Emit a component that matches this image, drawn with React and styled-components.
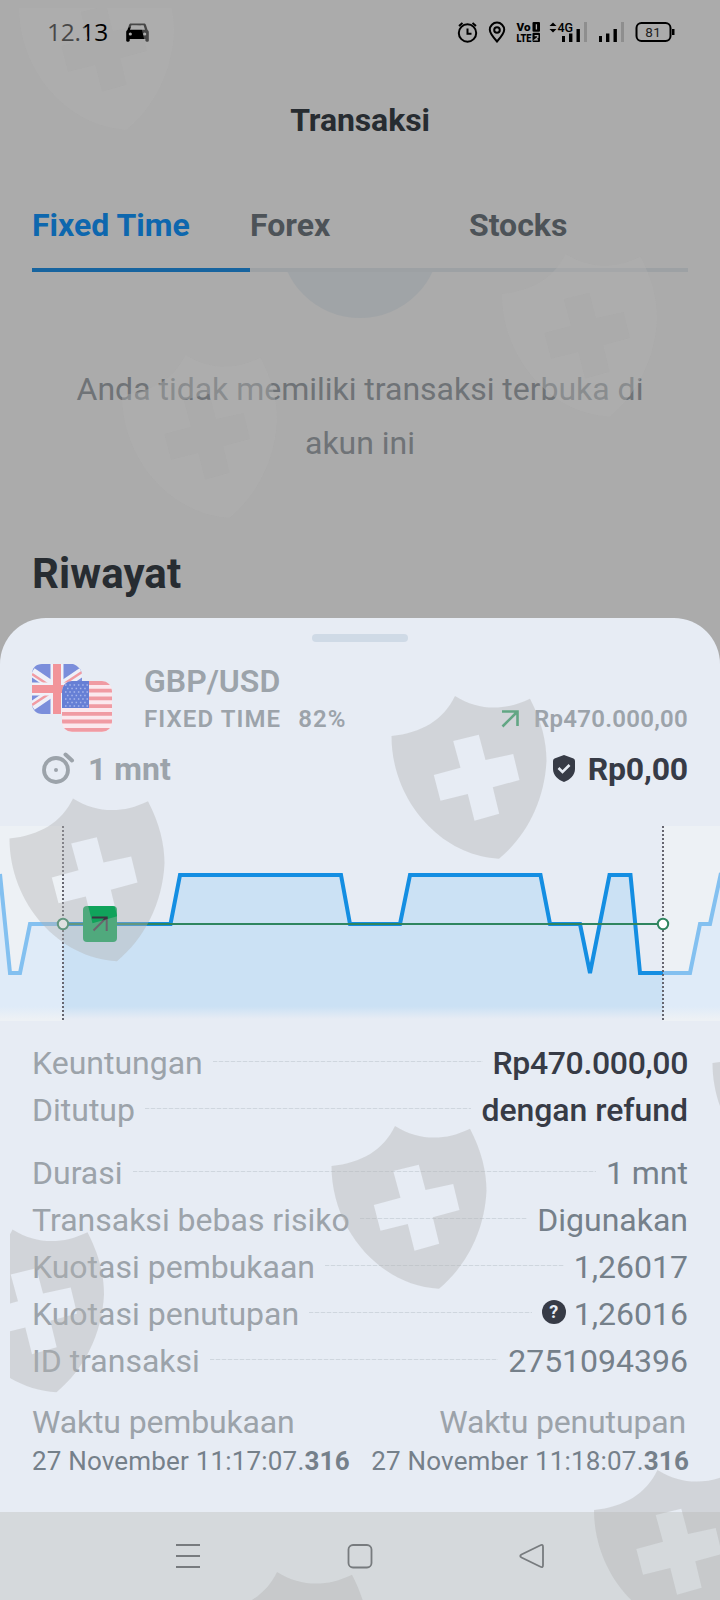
import React from 'react';
import styled, { createGlobalStyle } from 'styled-components';

const textDark = '#373b46';
const textMuted = '#9ca3aa';
const textValue = '#75808a';
const green = '#2f855f';

const GlobalStyle = createGlobalStyle`
  * {
    box-sizing: border-box;
  }

  body {
    margin: 0;
    background: #ababab;
    font-family: Roboto, sans-serif;
  }
`;

const Screen = styled.div`
  position: relative;
  display: flex;
  flex-direction: column;
  width: 720px;
  height: 1600px;
  overflow: hidden;
  background: #ababab;
`;

const StatusBar = styled.header`
  display: flex;
  justify-content: space-between;
  height: 64px;
  padding: 20px 42px 0 47px;
`;

const StatusLeft = styled.div`
  display: flex;
  gap: 19px;
`;

const Clock = styled.span`
  width: 60px;
  font: 400 24.5px/23px 'Open Sans', sans-serif;
  letter-spacing: -0.3px;
  color: #000;
  white-space: nowrap;
`;

const StatusSvg = styled.svg`
  display: block;
  margin-top: ${({ $top }) => $top || '0'};
  font-family: Roboto, sans-serif;
`;

const Title = styled.h1`
  margin: 36px 0 0;
  height: 105px;
  font-size: 32px;
  font-weight: 700;
  line-height: 40px;
  letter-spacing: -0.1px;
  text-align: center;
  color: #272c31;
`;

const Tabs = styled.nav`
  display: grid;
  grid-template-columns: 218px 219px 1fr;
  margin: 0 32px;
`;

const Tab = styled.div`
  height: 67px;
  font-size: 32px;
  font-weight: 700;
  line-height: 41px;
  color: ${({ $active }) => ($active ? '#0d67ae' : '#4d5358')};
  border-bottom: 4px solid ${({ $active }) => ($active ? '#17649f' : '#9da1a4')};
`;

const Empty = styled.section`
  display: flex;
  flex-direction: column;
  align-items: center;
  height: 277px;
`;

const EmptyCircle = styled.div`
  width: 160px;
  height: 90px;
  overflow: hidden;

  &::before {
    content: '';
    display: block;
    width: 160px;
    height: 160px;
    margin-top: -114px;
    border-radius: 50%;
    background: #a0a4a7;
  }
`;

const EmptyText = styled.p`
  width: 600px;
  margin: 0;
  font-size: 32px;
  line-height: 54px;
  letter-spacing: -0.02px;
  text-align: center;
  color: #6f7377;
`;

const History = styled.h2`
  height: 69px;
  margin: 0 32px;
  font-size: 42px;
  font-weight: 700;
  line-height: 50px;
  letter-spacing: 0.1px;
  color: #272c31;
`;

const Sheet = styled.main`
  height: 894px;
  background: #e7ecf4;
  border-radius: 46px 46px 0 0;
`;

const SheetTop = styled.div`
  height: 46px;
  padding-top: 16px;
`;

const Handle = styled.div`
  width: 96px;
  height: 8px;
  margin: 0 auto;
  border-radius: 4px;
  background: #cfdae6;
`;

const Asset = styled.div`
  display: flex;
  height: 76px;
  padding: 0 32px;
`;

const AssetInfo = styled.div`
  flex: 1;
  margin-left: 31px;
  color: ${textMuted};
`;

const Pair = styled.div`
  height: 37px;
  font-size: 32px;
  font-weight: 600;
  line-height: 34px;
`;

const SubLine = styled.div`
  display: flex;
  align-items: center;
  height: 36px;
  font-size: 24px;
  font-weight: 600;
  line-height: 36px;
  letter-spacing: 1.1px;
`;

const Percent = styled.span`
  margin-left: 17px;
`;

const Stake = styled.span`
  display: flex;
  align-items: center;
  gap: 15px;
  margin-left: auto;
  letter-spacing: 0.25px;
`;

const Result = styled.div`
  display: flex;
  justify-content: space-between;
  height: 86px;
  padding: 8px 32px 0 40px;
  font-size: 32px;
  font-weight: 700;
  line-height: 42px;
`;

const ResultPart = styled.div`
  display: flex;
  gap: ${({ $gap }) => $gap};
  letter-spacing: ${({ $spacing }) => $spacing || '0'};
  color: ${({ $color }) => $color};

  svg {
    margin-top: ${({ $iconTop }) => $iconTop};
  }
`;

const ChartSvg = styled.svg`
  display: block;
`;

const Details = styled.dl`
  margin: 0;
  padding: 19px 32px 0;
`;

const Row = styled.div`
  display: flex;
  height: 47px;
  margin-top: ${({ $gap }) => ($gap ? '16px' : '0')};
  font-size: 32px;
  line-height: 47px;
`;

const Label = styled.dt`
  color: ${textMuted};
`;

const Leader = styled.div`
  flex: 1;
  height: 1px;
  margin: 21px 10px 0 10px;
  background: repeating-linear-gradient(90deg, #cfd6de 0 4px, #e0e6ed 4px 6px);
`;

const Value = styled.dd`
  display: flex;
  margin: 0;
  font-weight: ${({ $strong }) => ($strong ? 500 : 400)};
  letter-spacing: ${({ $spacing }) => $spacing || '0'};
  color: ${({ $strong }) => ($strong ? textDark : textValue)};
`;

const Help = styled.span`
  width: 24px;
  height: 24px;
  margin: 9px 8px 0 0;
  border-radius: 50%;
  background: ${textDark};
  color: #e7ecf4;
  font-size: 18px;
  font-weight: 700;
  line-height: 24px;
  text-align: center;
`;

const Times = styled.div`
  display: flex;
  justify-content: space-between;
  margin: 14px -1px 0 0;
`;

const TimeBlock = styled.div`
  text-align: ${({ $right }) => ($right ? 'right' : 'left')};
`;

const TimeLabel = styled.div`
  padding-right: 3px;
  font-size: 32px;
  line-height: 47px;
  letter-spacing: -0.15px;
  color: ${textMuted};
`;

const TimeValue = styled.div`
  font-size: 26px;
  line-height: 30px;
  letter-spacing: 0.18px;
  color: ${textValue};
  white-space: nowrap;

  b {
    font-weight: 700;
  }
`;

const NavBar = styled.footer`
  display: flex;
  justify-content: space-between;
  height: 88px;
  padding: 30px 174px 0;
  background: #d5d9dc;
`;

const Watermark = styled.svg`
  position: absolute;
  inset: 0;
  pointer-events: none;
`;

const rows = [
  { label: 'Keuntungan', value: 'Rp470.000,00', strong: true, spacing: '-0.35px' },
  { label: 'Ditutup', value: 'dengan refund', strong: true, spacing: '-0.05px' },
  { label: 'Durasi', value: '1 mnt', gap: true },
  { label: 'Transaksi bebas risiko', value: 'Digunakan' },
  { label: 'Kuotasi pembukaan', value: '1,26017' },
  { label: 'Kuotasi penutupan', value: '1,26016', help: true },
  { label: 'ID transaksi', value: '2751094396' },
];

// the ones over the dimmed page are barely visible
const shields = [
  { x: 19, y: -33, clip: 'top' },
  { x: 502, y: 254 },
  { x: 122, y: 355 },
  { x: 391.5, y: 696 },
  { x: 9.5, y: 798.5 },
  { x: 712.5, y: 1023 },
  { x: 331.5, y: 1126 },
  { x: -51, y: 1229.5, clip: 'left' },
  { x: 594, y: 1470 },
  { x: 213.5, y: 1572 },
];

const shieldPath =
  'M0 40C30 37 52 24 63.5 0C88 15 113 15 138.5 2.7C150 25 155 45 155 65C153 105 135 140 107.5 162.7C50 160 0 105 0 40Z' +
  'M61.7 45L87.3 38.7L94 64L121.7 58L128 84L101.3 91.3L107.7 117.7L83 124.7L76.3 98L49 104.7L42.3 79L69 71.7Z';

const before = '0,48 10,147 20,147 30,98 63,98';
const active =
  '63,98 170.5,98 180,49 341,49 350,98 400,98 410,49 540.5,49 550,98 580,98 590,147 609.5,49 630.5,49 640,147 663,147';
const after = '663,147 690,147 700,98 710,98 721,47';

const StatusIcons = () => (
  <StatusSvg width="222" height="26" viewBox="456 20 222 26" fill="none" stroke="#000" strokeWidth="2">
    <circle cx="467.5" cy="33" r="8.7" />
    <path d="M467.5 28.5V33.8H471.5M459 26L462.5 23M476 26L472.5 23" />
    <path d="M497 41.5C492 36 489.8 33 489.8 29.8A7.2 7.2 0 0 1 504.2 29.8C504.2 33 502 36 497 41.5Z" />
    <circle cx="497" cy="30" r="2.8" />
    <g fill="#000" stroke="none">
      <g fontWeight="900" fontSize="9">
        <g transform="translate(516.5 30.7) scale(1 1.25)">
          <text textLength="14" lengthAdjust="spacingAndGlyphs">Vo</text>
        </g>
        <g transform="translate(516.5 42) scale(1 1.25)">
          <text textLength="15" lengthAdjust="spacingAndGlyphs">LTE</text>
        </g>
      </g>
      <rect x="532.5" y="22" width="7.5" height="9.7" rx="1" />
      <rect x="532.5" y="32.7" width="7.5" height="9.3" rx="1" />
      <path d="M536.4 24.3V29.4M534.6 35.6H537.8V37.4L534.8 39.8H538" fill="none" stroke="#ababab" strokeWidth="1.3" />
      <path d="M549.5 26L553 22.5L556.5 26ZM549.5 29L553 32.5L556.5 29Z" />
      <text x="557.5" y="31.5" fontSize="12.5" fontWeight="500" textLength="15.5">4G</text>
      <path d="M562 36h3v6h-3zM569 33.5h3.4v8.5h-3.4zM576.5 29h3.4v13h-3.4z" />
      <path d="M599 36h3v6h-3zM606 33.5h3.4v8.5h-3.4zM613.5 29h3.4v13h-3.4z" />
      <path d="M584 22h3v20h-3zM621 22h3v20h-3z" fill="#8e8e8e" />
      <path d="M672 29h2.5v6h-2.5z" />
      <text x="645.3" y="36.8" fontSize="13.5" letterSpacing="0.4" fill="#222">81</text>
    </g>
    <rect x="636.5" y="23" width="34" height="18" rx="5" />
  </StatusSvg>
);

const CarIcon = () => (
  <StatusSvg width="23" height="19" viewBox="0 0 23 19" $top="2.5px">
    <path
      fillRule="evenodd"
      d="M5 .5h13c1 0 1.5.4 1.9 1.3L21.6 7c.9.5 1.2 1.2 1.2 2v8.5c0 .8-.5 1.2-1.2 1.2h-.9c-.8 0-1.3-.5-1.3-1.2V16H3.7v1.5c0 .7-.5 1.2-1.3 1.2h-1C.7 18.7.2 18.3.2 17.5V9c0-.8.3-1.5 1.2-2L3.1 1.8C3.5.9 4 .5 5 .5ZM5.4 2.3L4 6.8h15l-1.4-4.5ZM4.3 9.4a1.6 1.6 0 1 0 0 3.2a1.6 1.6 0 0 0 0-3.2ZM18.7 9.4a1.6 1.6 0 1 0 0 3.2a1.6 1.6 0 0 0 0-3.2Z"
    />
  </StatusSvg>
);

const Flags = () => (
  <svg width="81" height="68" viewBox="0 0 81 68">
    <defs>
      <clipPath id="uk">
        <path d="M10 0H41C46 2 50 6 50 11V50H10C4 50 0 45 0 40V10C0 4 4 0 10 0Z" />
      </clipPath>
      <clipPath id="us">
        <rect x="30" y="17" width="50" height="51" rx="10" />
      </clipPath>
    </defs>
    <g clipPath="url(#uk)">
      <rect width="50" height="50" fill="#7b8edb" />
      <path d="M0 8L50 42M50 8L0 42" stroke="#eef0f8" strokeWidth="9" />
      <path d="M0 10L50 43M50 8L0 41" stroke="#f19ca3" strokeWidth="2.5" />
      <path d="M25 0V50M0 25H50" stroke="#f1f1f8" strokeWidth="13" />
      <path d="M25 0V50M0 25H50" stroke="#f2949a" strokeWidth="8" />
    </g>
    <g clipPath="url(#us)">
      <rect x="30" y="17" width="50" height="51" fill="#fbe9ee" />
      <path
        d="M30 19H80M30 26.7H80M30 34.4H80M30 42.1H80M30 49.8H80M30 57.5H80M30 65.8H80"
        stroke="#f09ba3"
        strokeWidth="3.8"
      />
      <rect x="30" y="17" width="27" height="27" fill="#667fd5" />
      <path
        d="M33 21H56M35 24.5H56M33 28H56M35 31.5H56M33 35H56M35 38.5H56M33 42H56"
        stroke="#a9b7eb"
        strokeWidth="1.5"
        strokeDasharray="1.5 2.8"
      />
    </g>
  </svg>
);

const StopwatchIcon = () => (
  <svg width="36" height="34" viewBox="0 0 36 34" fill="none" stroke={textMuted}>
    <circle cx="16" cy="18" r="12" strokeWidth="3.8" />
    <circle cx="16" cy="18" r="2" fill={textMuted} stroke="none" />
    <path d="M25.5 2.5L32 8.5" strokeWidth="4" strokeLinecap="round" />
  </svg>
);

const ShieldCheckIcon = () => (
  <svg width="24" height="28" viewBox="0 0 24 28">
    <path d="M12 0L21.5 3.5Q23 4 23 6V14C23 20 18 25 12 27C6 25 1 20 1 14V6Q1 4 2.5 3.5Z" fill={textDark} />
    <path d="M6.5 13L10.5 17L17.5 10" fill="none" stroke="#e7ecf4" strokeWidth="2.6" />
  </svg>
);

const Chart = () => (
  <ChartSvg width="720" height="195" viewBox="0 0 720 195" fill="none">
    <defs>
      <linearGradient id="fade" x1="0" y1="0" x2="0" y2="195" gradientUnits="userSpaceOnUse">
        <stop offset="0" stopColor="#cbe1f4" />
        <stop offset="0.925" stopColor="#cbe1f4" />
        <stop offset="0.99" stopColor="#e7ecf4" />
      </linearGradient>
      <linearGradient id="fadeLight" x1="0" y1="0" x2="0" y2="195" gradientUnits="userSpaceOnUse">
        <stop offset="0" stopColor="#dfebf8" />
        <stop offset="0.925" stopColor="#dfebf8" />
        <stop offset="0.99" stopColor="#edf1f5" />
      </linearGradient>
    </defs>
    <path d="M0 0H63V195H0ZM663 0H720V195H663Z" fill="#edf1f5" />
    <polygon points={`0,195 ${before} 63,195`} fill="url(#fadeLight)" />
    <polygon points={`663,195 ${after} 721,195`} fill="url(#fadeLight)" />
    <polygon points={`63,195 ${active} 663,195`} fill="url(#fade)" />
    <polyline points={before} stroke="#83c0f0" strokeWidth="4" />
    <polyline points={after} stroke="#83c0f0" strokeWidth="4" />
    <polyline points={active} stroke="#148ee2" strokeWidth="4" />
    <path d="M63 98H663" stroke={green} strokeWidth="2" />
    <path d="M63 0V195M663 0V195" stroke="#65656f" strokeWidth="2" strokeDasharray="2 2" />
    <circle cx="63" cy="98" r="5.2" fill="#fff" stroke={green} strokeWidth="2" />
    <circle cx="663" cy="98" r="5.2" fill="#fff" stroke={green} strokeWidth="2" />
    <rect x="83" y="80" width="34" height="36" rx="4" fill="#10a35b" />
    <path d="M93.5 104.5L106.5 91.5M92 91.5H106.7V105" stroke="#3a3540" strokeWidth="2" />
  </ChartSvg>
);

const Shields = () => (
  <Watermark width="720" height="1600" viewBox="0 0 720 1600">
    <defs>
      <clipPath id="clip-top">
        <rect x="0" y="8" width="720" height="200" />
      </clipPath>
      <clipPath id="clip-left">
        <rect x="10" y="1200" width="300" height="220" />
      </clipPath>
    </defs>
    {shields.map(({ x, y, clip }) => (
      <g key={`${x}-${y}`} clipPath={clip && `url(#clip-${clip})`}>
        <path d={shieldPath} transform={`translate(${x} ${y})`} fill="#b1b1b1" fillOpacity="0.4" fillRule="evenodd" />
      </g>
    ))}
  </Watermark>
);

const App = () => (
  <Screen>
    <GlobalStyle />
    <StatusBar>
      <StatusLeft>
        <Clock>12.13</Clock>
        <CarIcon />
      </StatusLeft>
      <StatusIcons />
    </StatusBar>
    <Title>Transaksi</Title>
    <Tabs>
      <Tab $active>Fixed Time</Tab>
      <Tab>Forex</Tab>
      <Tab>Stocks</Tab>
    </Tabs>
    <Empty>
      <EmptyCircle />
      <EmptyText>Anda tidak memiliki transaksi terbuka di akun ini</EmptyText>
    </Empty>
    <History>Riwayat</History>
    <Sheet>
      <SheetTop>
        <Handle />
      </SheetTop>
      <Asset>
        <Flags />
        <AssetInfo>
          <Pair>GBP/USD</Pair>
          <SubLine>
            FIXED TIME
            <Percent>82%</Percent>
            <Stake>
              <svg width="18" height="18" viewBox="0 0 18 18" fill="none" stroke="#2d9e66" strokeWidth="2.6">
                <path d="M1.5 16.5L15.5 2.5M1 1.5H16.5V16" />
              </svg>
              Rp470.000,00
            </Stake>
          </SubLine>
        </AssetInfo>
      </Asset>
      <Result>
        <ResultPart $gap="12px" $iconTop="4px" $color={textMuted}>
          <StopwatchIcon />
          1 mnt
        </ResultPart>
        <ResultPart $gap="12px" $iconTop="7px" $spacing="-0.2px" $color={textDark}>
          <ShieldCheckIcon />
          Rp0,00
        </ResultPart>
      </Result>
      <Chart />
      <Details>
        {rows.map(({ label, value, strong, gap, help, spacing }) => (
          <Row key={label} $gap={gap}>
            <Label>{label}</Label>
            <Leader />
            <Value $strong={strong} $spacing={spacing}>
              {help && <Help>?</Help>}
              {value}
            </Value>
          </Row>
        ))}
        <Times>
          <TimeBlock>
            <TimeLabel>Waktu pembukaan</TimeLabel>
            <TimeValue>27 November 11:17:07.<b>316</b></TimeValue>
          </TimeBlock>
          <TimeBlock $right>
            <TimeLabel>Waktu penutupan</TimeLabel>
            <TimeValue>27 November 11:18:07.<b>316</b></TimeValue>
          </TimeBlock>
        </Times>
      </Details>
    </Sheet>
    <NavBar>
      <svg width="28" height="28" viewBox="0 0 28 28" fill="none" stroke="#777b7e" strokeWidth="2">
        <path d="M2 3H26M2 14H26M2 25H26" />
      </svg>
      <svg width="28" height="28" viewBox="0 0 28 28" fill="none" stroke="#777b7e" strokeWidth="1.8">
        <rect x="2.5" y="3" width="23" height="22.5" rx="4.5" />
      </svg>
      <svg width="28" height="28" viewBox="0 0 28 28" fill="none" stroke="#777b7e" strokeWidth="1.8">
        <path d="M22.5 3.2Q25 2 25 5V23Q25 26 22.5 24.8L3.5 15.5Q1 14 3.5 12.5Z" />
      </svg>
    </NavBar>
    <Shields />
  </Screen>
);

export default App;
